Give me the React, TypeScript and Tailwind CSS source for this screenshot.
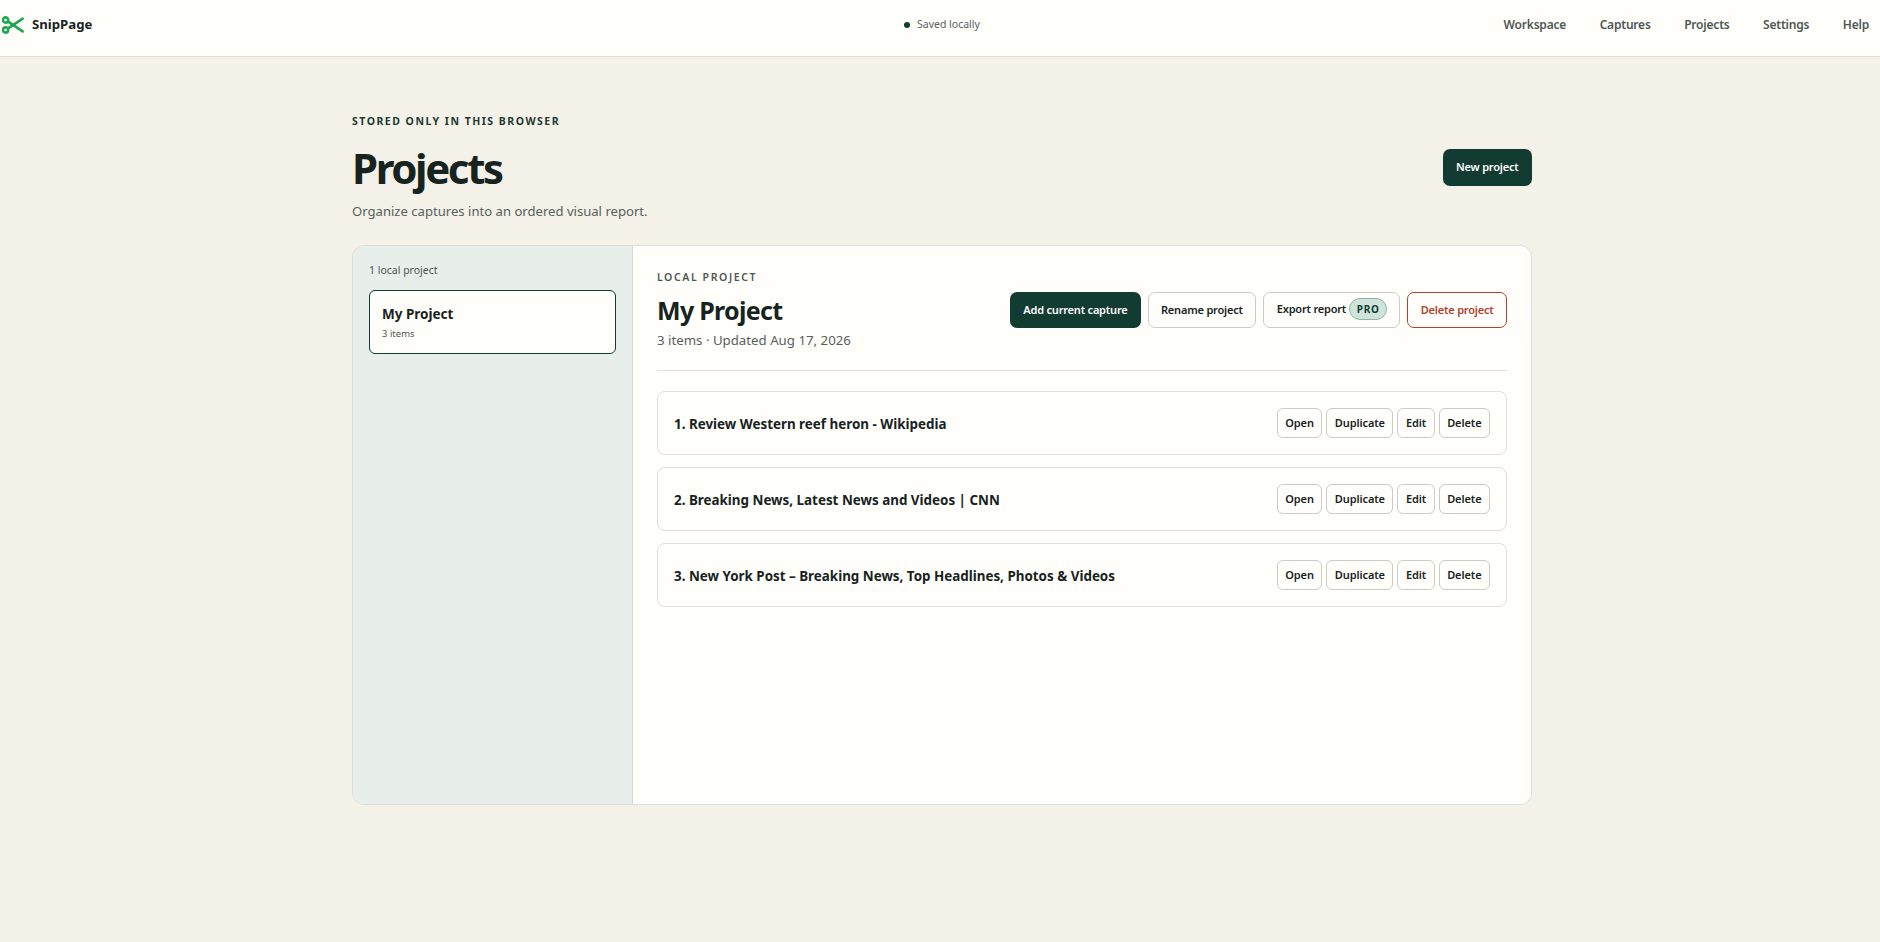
const rows = [
  "1. Review Western reef heron - Wikipedia",
  "2. Breaking News, Latest News and Videos | CNN",
  "3. New York Post – Breaking News, Top Headlines, Photos & Videos",
]

const navLinks = ["Workspace", "Captures", "Projects", "Settings", "Help"]

function ScissorsLogo() {
  return (
    <svg width="22" height="18" viewBox="0 0 22 18" fill="none" stroke="#1fa653" strokeWidth="2.6" strokeLinecap="round">
      <circle cx="3.6" cy="4" r="2.6" />
      <circle cx="3.6" cy="14" r="2.6" />
      <path d="M6.2 5.6 20.6 15.4" />
      <path d="M6.2 12.4 20.6 2.6" />
    </svg>
  )
}

function RowButton({ label }: { label: string }) {
  return (
    <button className="h-[30px] rounded-[6px] border border-[#c9ccc7] bg-[#fffefa] px-[7.5px] text-[11px] font-semibold tracking-[-0.1px] text-[#17231f]">
      {label}
    </button>
  )
}

export default function App() {
  return (
    <div className="min-h-[942px] bg-[#f4f1e8] font-['Noto_Sans',sans-serif] text-[#17231f]">
      <header className="grid h-[57px] grid-cols-[902px_auto_1fr] items-center border-b border-[#dfdfd9] bg-[#fffefb] pb-[6px] pl-[2px] pr-[11px]">
        <div className="flex items-center gap-[8px]">
          <ScissorsLogo />
          <span className="text-[13.2px] font-bold">SnipPage</span>
        </div>
        <div className="flex items-center gap-[7px] text-[10.5px] text-[#56625d]">
          <span className="h-[6px] w-[6px] rounded-full bg-[#123c32]" />
          Saved locally
        </div>
        <nav className="flex justify-end gap-[33.5px] text-[12px] font-semibold tracking-[-0.2px] text-[#4c5853]">
          {navLinks.map((link) => (
            <a key={link}>{link}</a>
          ))}
        </nav>
      </header>

      <main className="pl-[352px] pr-[348px] pt-[57px]">
        <p className="text-[10.5px] leading-[14px] font-bold tracking-[1.5px] text-[#1c3a32]">STORED ONLY IN THIS BROWSER</p>
        <div className="mt-[12px] flex items-center justify-between">
          <div>
            <h1 className="text-[42px] leading-[56px] font-bold tracking-[-2.4px] text-[#17231f]">Projects</h1>
            <p className="mt-[5px] text-[13.1px] leading-[20px] text-[#56625d]">Organize captures into an ordered visual report.</p>
          </div>
          <button className="mb-[26px] h-[37px] rounded-[7px] bg-[#123c32] px-[13.5px] text-[11px] font-semibold tracking-[-0.2px] text-white">New project</button>
        </div>

        <section className="mt-[24px] flex h-[560px] overflow-hidden rounded-[12px] border border-[#dcdedb]">
          <aside className="w-[280px] border-r border-[#d5d8d4] bg-[#e8eeea] px-[16px] pt-[16px]">
            <p className="text-[10.5px] leading-[16px] text-[#4c5853]">1 local project</p>
            <div className="mt-[12px] h-[64px] rounded-[6px] border border-[#123c32] bg-[#fffefa] px-[12px] pt-[14px]">
              <p className="text-[13.5px] leading-[18px] font-bold">My Project</p>
              <p className="mt-[4px] text-[9.5px] leading-[14px] text-[#4c5853]">3 items</p>
            </div>
          </aside>

          <div className="flex-1 bg-[#fffefa] px-[24px] pt-[24px]">
            <div className="flex items-start justify-between border-b border-[#dfdfd9] pb-[20px]">
              <div>
                <p className="text-[10.5px] leading-[14px] font-semibold tracking-[1.6px] text-[#4c5853]">LOCAL PROJECT</p>
                <h2 className="mt-[9px] text-[25px] leading-[34px] font-bold tracking-[-0.7px]">My Project</h2>
                <p className="mt-[3px] text-[13.25px] leading-[20px] text-[#56625d]">3 items · Updated Aug 17, 2026</p>
              </div>
              <div className="mt-[22px] flex gap-[7px] text-[11px] font-semibold tracking-[-0.2px]">
                <button className="h-[36px] rounded-[7px] bg-[#123c32] px-[13.5px] text-white">Add current capture</button>
                <button className="h-[36px] rounded-[7px] border border-[#c9ccc7] px-[12px]">Rename project</button>
                <button className="flex h-[36px] items-center gap-[3px] rounded-[7px] border border-[#c9ccc7] pb-[2px] pl-[13px] pr-[12px]">
                  Export report
                  <span className="flex h-[22px] items-center rounded-full border border-[#8fb3a5] bg-[#cfe5dc] px-[6.5px] text-[10px] font-bold tracking-[0.8px] text-[#123c32]">PRO</span>
                </button>
                <button className="h-[36px] rounded-[7px] border border-[#b0412f] px-[12.5px] text-[#b0412f]">Delete project</button>
              </div>
            </div>

            <ul className="mt-[20px] flex flex-col gap-[12px]">
              {rows.map((title) => (
                <li key={title} className="flex h-[64px] items-center justify-between rounded-[8px] border border-[#dfdfd9] bg-[#fffefa] pl-[16px] pr-[16px]">
                  <span className="pt-[2px] text-[13.4px] font-bold">{title}</span>
                  <div className="flex gap-[4px]">
                    <RowButton label="Open" />
                    <RowButton label="Duplicate" />
                    <RowButton label="Edit" />
                    <RowButton label="Delete" />
                  </div>
                </li>
              ))}
            </ul>
          </div>
        </section>
      </main>
    </div>
  )
}
